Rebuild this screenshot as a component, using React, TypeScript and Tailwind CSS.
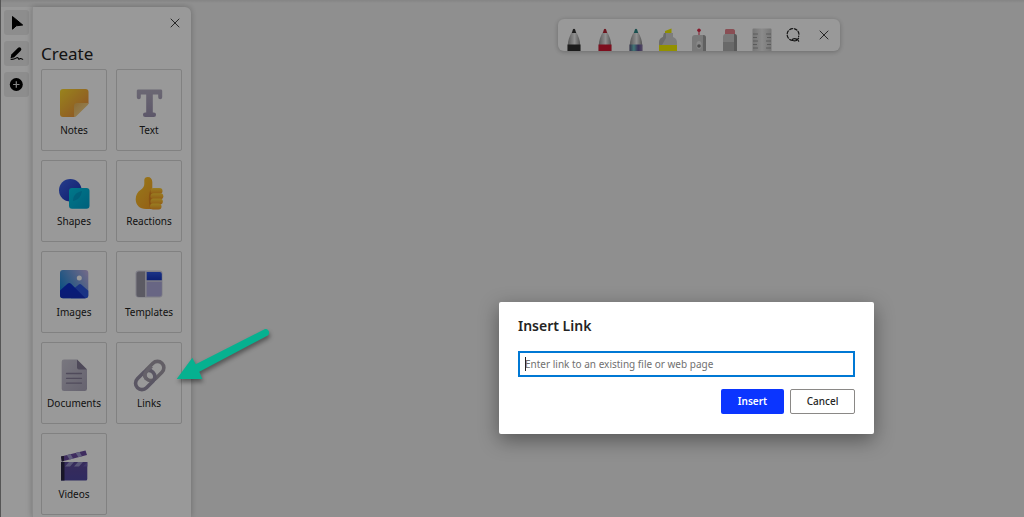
import type { ReactNode } from 'react';
import { X } from 'lucide-react';

function TileIcon({ children }: { children: ReactNode }) {
  return (
    <svg viewBox="0 0 34 34" className="size-[34px]" aria-hidden="true">
      {children}
    </svg>
  );
}

function Gradient({ id, from, to, vertical = false }: { id: string; from: string; to: string; vertical?: boolean }) {
  return (
    <linearGradient id={id} x1="0" y1="0" x2={vertical ? '0' : '1'} y2="1">
      <stop offset="0" stopColor={from} />
      <stop offset="1" stopColor={to} />
    </linearGradient>
  );
}

const notesIcon = (
  <TileIcon>
    <defs>
      <Gradient id="note" from="#ffdc30" to="#ea8340" />
      <Gradient id="fold" from="#e9b455" to="#fbe2a4" />
    </defs>
    <path d="M6 4h22.500a3 3 0 0 1 3 3v11.500L17.500 32H6a3 3 0 0 1-3-3V7a3 3 0 0 1 3-3Z" fill="url(#note)" />
    <path d="M31.500 18H20a3 3 0 0 0-3 3v11c1 0 1.700-.2 2.400-.9L30.700 20c.5-.6.8-1.200.8-2Z" fill="url(#fold)" />
  </TileIcon>
);

const textIcon = (
  <TileIcon>
    <defs><Gradient id="tee" from="#b2acc0" to="#9b91b0" vertical /></defs>
    <path
      d="M6.200 4.500h22.600c.8 0 1.400.6 1.400 1.400v6.300a2 2 0 0 1-4 0V9.500h-5.400v18h1a2.200 2.200 0 0 1 0 4.500h-8.600a2.200 2.200 0 0 1 0-4.500h1v-18H8.800v2.700a2 2 0 0 1-4 0V5.900c0-.8.6-1.400 1.400-1.400Z"
      fill="url(#tee)"
    />
  </TileIcon>
);

const shapesIcon = (
  <TileIcon>
    <defs>
      <Gradient id="disc" from="#3f66e8" to="#1a2fb8" />
      <Gradient id="square" from="#00c8e6" to="#00a0ce" />
    </defs>
    <circle cx="13.300" cy="14.300" r="11.300" fill="url(#disc)" />
    <rect x="12" y="12" width="20.500" height="20.700" rx="3" fill="url(#square)" />
    <path d="M16 25c0-6 4-9 9-10-1 6-4 9-9 10Z" fill="#0090c0" opacity=".6" />
  </TileIcon>
);

const reactionsIcon = (
  <TileIcon>
    <defs>
      <Gradient id="palm" from="#ffcb2c" to="#f59a24" />
      <Gradient id="finger" from="#ffd338" to="#f39a26" vertical />
    </defs>
    <path
      d="M15.800 1c2.800 0 4.500 2 4.500 5v8.500h5V33H14C7.500 33 3.700 29 3.700 23.300c0-4.300 2-7.500 4.800-9.300 2.400-1.700 3.800-3.500 3.800-6V4c0-1.800 1.500-3 3.500-3Z"
      fill="url(#palm)"
    />
    <path d="M18.500 14c-2.200 4-2.200 14 0 19h3V14Z" fill="#dd7b20" opacity=".7" />
    <g fill="url(#finger)">
      <rect x="18.500" y="12" width="12" height="6" rx="3" />
      <rect x="18.500" y="17.200" width="12.800" height="6" rx="3" />
      <rect x="18.500" y="22.400" width="12.300" height="6" rx="3" />
      <rect x="18" y="27.500" width="11.500" height="6" rx="3" />
    </g>
  </TileIcon>
);

const imagesIcon = (
  <TileIcon>
    <defs>
      <linearGradient id="sky" x1="0" y1=".6" x2="1" y2="0">
        <stop offset="0" stopColor="#1a88d8" />
        <stop offset="1" stopColor="#c5b2e4" />
      </linearGradient>
      <Gradient id="hill" from="#0a30d0" to="#1430c0" vertical />
    </defs>
    <rect x="3" y="3" width="28.300" height="28.300" rx="3" fill="url(#sky)" />
    <path d="M14 24l7.500-6.300c1-.9 2-.9 3 0l6.800 6v4.600a3 3 0 0 1-3 3H14Z" fill="#2c55dc" />
    <path d="M3 23.500l7.500-6.800c1.200-1.100 2.300-1.100 3.500 0l14.500 14.600H6a3 3 0 0 1-3-3Z" fill="url(#hill)" />
    <circle cx="22.300" cy="11" r="2.500" fill="#fff" />
  </TileIcon>
);

const templatesIcon = (
  <TileIcon>
    <defs><Gradient id="header" from="#2c55e0" to="#1534be" vertical /></defs>
    <rect x="3.500" y="3.500" width="27" height="27" rx="3" fill="#d6d4e2" />
    <path d="M7 4.500h6V30H7a2.500 2.500 0 0 1-2.500-2.500V7A2.500 2.500 0 0 1 7 4.500Z" fill="#9896a6" />
    <path d="M14.700 5h13.100a2 2 0 0 1 2 2v6.300H14.700Z" fill="url(#header)" />
    <path d="M14.700 14.700h15.100V27a2.500 2.500 0 0 1-2.500 2.500H14.700Z" fill="#aeabdc" />
  </TileIcon>
);

const documentsIcon = (
  <TileIcon>
    <defs><Gradient id="sheet" from="#cac7d4" to="#aaa5ba" /></defs>
    <path d="M7 1.500h13l10 10v19.300a2.300 2.300 0 0 1-2.300 2.300H7a2.300 2.300 0 0 1-2.300-2.300v-27A2.300 2.300 0 0 1 7 1.500Z" fill="url(#sheet)" />
    <path d="M20 1.500l10 10h-8a2 2 0 0 1-2-2Z" fill="#827b94" />
    <path d="M9.500 15.500h15M9.500 20.300h15M9.500 25.200h15" stroke="#857d98" strokeWidth="1.300" strokeLinecap="round" />
  </TileIcon>
);

const linksIcon = (
  <TileIcon>
    <g fill="none" strokeWidth="3.600">
      <rect x="-11" y="-6.400" width="22" height="12.800" rx="6.400" transform="translate(22.200 13) rotate(-45)" stroke="#a39da8" />
      <rect x="-11" y="-6.400" width="22" height="12.800" rx="6.400" transform="translate(13.200 22) rotate(-45)" stroke="#968fa6" />
      <path d="M14.300 20.900c-2-2.600-1.800-5.400.3-7.600l5-5" stroke="#a8a2b0" />
    </g>
  </TileIcon>
);

const videosIcon = (
  <TileIcon>
    <defs>
      <Gradient id="slate" from="#5d4a98" to="#5048a0" vertical />
      <clipPath id="arm"><path d="M4 7.500 28.500 1.500 30 6 4.800 12.500Z" /></clipPath>
    </defs>
    <g clipPath="url(#arm)">
      <path d="M3 0h28v14H3Z" fill="#6a4c9e" />
      <path d="m9 5 4 6h4l-4-7ZM18 3l4 6h4l-4-7Z" fill="#a09bd0" />
      <path d="M4 7l3 0 0 6-3 0Z" fill="#302944" />
    </g>
    <path d="M4 13h26.300v17a1.500 1.500 0 0 1-1.500 1.500H4Z" fill="url(#slate)" />
    <path d="M4 13h3.500v18.500H4Z" fill="#292544" />
    <path d="m12 13-4 4.500h5l4-4.500ZM21 13l-4 4.500h5l4-4.500Z" fill="#9691c8" />
    <path d="M30.300 13v4.500H26l4-4.500Z" fill="#6b5cae" />
  </TileIcon>
);

const tiles: { label: string; icon: ReactNode }[] = [
  { label: 'Notes', icon: notesIcon },
  { label: 'Text', icon: textIcon },
  { label: 'Shapes', icon: shapesIcon },
  { label: 'Reactions', icon: reactionsIcon },
  { label: 'Images', icon: imagesIcon },
  { label: 'Templates', icon: templatesIcon },
  { label: 'Documents', icon: documentsIcon },
  { label: 'Links', icon: linksIcon },
  { label: 'Videos', icon: videosIcon },
];

function RailButton({ label, children }: { label: string; children: ReactNode }) {
  return (
    <button type="button" aria-label={label} className="flex size-[25px] items-center justify-center rounded-[3px] bg-[#ececec]">
      {children}
    </button>
  );
}

function Rail() {
  return (
    <nav aria-label="Tools" className="flex w-[31px] shrink-0 flex-col items-center gap-[6px] bg-white pt-[3px]">
      <RailButton label="Select">
        <svg viewBox="0 0 25 25" className="size-[25px]"><path d="M8.500 6.500v12.700l3.800-3.400 6.400-.8Z" fill="#000" stroke="#000" strokeLinejoin="round" /></svg>
      </RailButton>
      <RailButton label="Ink">
        <svg viewBox="0 0 25 25" className="size-[25px]" fill="none" strokeLinecap="round">
          <path d="M15.300 8.300 9.500 14.200" stroke="#000" strokeWidth="4" />
          <path d="m7.600 12.800 3.200 3.200-4.300 1.300Z" fill="#000" />
          <path d="M7 18.300c2 .2 3.500-.2 5-1.200 1.500-.9 2.400-.4 2.400.4 0 1 1.200.6 2.100.1 1-.5 1.300.8 2.200.7" stroke="#000" strokeWidth="1.100" />
        </svg>
      </RailButton>
      <RailButton label="Create">
        <svg viewBox="0 0 25 25" className="size-[25px]">
          <circle cx="12.300" cy="12.500" r="6.500" />
          <path d="M12.300 9.300v6.400M9.100 12.500h6.400" stroke="#ddd" strokeWidth="1.200" />
        </svg>
      </RailButton>
    </nav>
  );
}

function CreatePanel() {
  return (
    <section className="flex w-[159px] shrink-0 flex-col rounded-tr-md border-l border-[#e8e8e8] bg-white px-2 shadow-[0_0_6px_rgba(0,0,0,0.25)]">
      <button type="button" aria-label="Close panel" className="mt-2 flex size-4 items-center justify-center self-end text-[#222]">
        <X className="size-4" strokeWidth={1.3} />
      </button>
      <h1 className="mt-[11px] text-[17px] leading-6 text-[#222]">Create</h1>
      <div className="mt-[3px] grid grid-cols-[66px_66px] gap-[9px]">
        {tiles.map((tile) => (
          <button
            key={tile.label}
            type="button"
            className="flex h-[82px] flex-col items-center gap-[3px] rounded-xs border border-[#d8d8d8] pt-[15px] text-[10px] leading-4 text-[#222]"
          >
            {tile.icon}
            <span>{tile.label}</span>
          </button>
        ))}
      </div>
    </section>
  );
}

function Pen({ id, tip, band }: { id: string; tip: string; band: string[] }) {
  return (
    <svg viewBox="0 0 14 23" className="h-[23px] w-[14px]" aria-hidden="true">
      <defs>
        <linearGradient id={`${id}-band`}>
          {band.map((color, i) => (
            <stop key={color} offset={i / Math.max(1, band.length - 1)} stopColor={color} />
          ))}
        </linearGradient>
        <linearGradient id={`${id}-barrel`}>
          <stop offset="0" stopColor="#949494" />
          <stop offset=".55" stopColor="#f0f0f0" />
          <stop offset="1" stopColor="#8b8b8b" />
        </linearGradient>
      </defs>
      <path d="M5 4h4c2.500 4 4 8 4.200 13v6H.8v-6C1 12 2.500 8 5 4Z" fill={`url(#${id}-barrel)`} />
      <path d="M4.800 5 6 1.300c.4-.8 1.600-.8 2 0L9.200 5Z" fill={tip} />
      <path d="M.5 16.500h13V23H.5Z" fill={`url(#${id}-band)`} />
    </svg>
  );
}

function Highlighter() {
  return (
    <svg viewBox="0 0 20 23" className="h-[23px] w-5" aria-hidden="true">
      <path d="M7 5V3l6.500-2.500V5Z" fill="#f0ef00" />
      <path d="M6 5h9v4c3 1 4 3 4 6v8H1v-8c0-3 1-5 4-6Z" fill="#d0d0d0" />
      <path d="M6 5h2v5l-4 7H1v-2c0-3 1-5 4-6Z" fill="#b4b4b4" />
      <path d="M1 17h18v6H1Z" fill="#f5f200" />
    </svg>
  );
}

function LaserPointer() {
  return (
    <svg viewBox="0 0 16 23" className="h-[23px] w-4" aria-hidden="true">
      <path d="M8 2v6" stroke="#e0526a" strokeWidth="1.200" />
      <circle cx="8" cy="2.200" r="1.800" fill="#e02b49" />
      <path d="M4 7h8c2 0 3 1 3 3v13H1V10c0-2 1-3 3-3Z" fill="#cacaca" />
      <path d="M12 7c2 0 3 1 3 3v13h-3Z" fill="#a0a0a0" />
      <ellipse cx="8" cy="17" rx="2.600" ry="4" fill="#e4e4e4" />
      <circle cx="8" cy="18" r="1.800" fill="#808080" />
    </svg>
  );
}

function Eraser() {
  return (
    <svg viewBox="0 0 16 23" className="h-[23px] w-4" aria-hidden="true">
      <path d="M4 1h7c1.300 0 2 1 2 2v4H3V3c0-1.200.3-2 1-2Z" fill="#e4828c" />
      <path d="M3.500 6h9c1.600 0 2.500 1 2.500 3v14H1V9c0-2 .9-3 2.500-3Z" fill="#cacaca" />
      <path d="M1 14h14v9H1Z" fill="#b0b0b0" />
      <path d="M12 6h.5C14.100 6 15 7 15 9v14h-3Z" fill="#959595" />
    </svg>
  );
}

function Ruler() {
  return (
    <svg viewBox="0 0 20 23" className="h-[23px] w-5" aria-hidden="true">
      <defs>
        <linearGradient id="ruler">
          <stop offset="0" stopColor="#c4c4c4" />
          <stop offset=".5" stopColor="#e8e8e8" />
          <stop offset="1" stopColor="#c4c4c4" />
        </linearGradient>
      </defs>
      <path d="M1.500.5h17a1 1 0 0 1 1 1V23H.5V1.500a1 1 0 0 1 1-1Z" fill="url(#ruler)" />
      <path d="M1 6h5M1 9.500h4M1 13h5M1 16.500h4M1 20h5M19 6h-5M19 9.500h-4M19 13h-5M19 16.500h-4M19 20h-5" stroke="#8a8a8a" strokeWidth=".8" />
    </svg>
  );
}

function Lasso() {
  return (
    <svg viewBox="0 0 16 16" className="size-4" fill="none" stroke="#222" strokeWidth="1.200" strokeLinecap="round">
      <path d="M7.500 13.400A5.900 5.900 0 1 1 13.600 9.500" strokeDasharray="3 1.700" />
      <ellipse cx="9.600" cy="12.800" rx="2.200" ry="1.100" />
      <path d="M11.300 12.300c1 .3 2 1 2.400 1.900M11.300 13.400l2.300-2.200" />
    </svg>
  );
}

function InkToolbar() {
  const inks: { label: string; icon: ReactNode }[] = [
    { label: 'Black pen', icon: <Pen id="black" band={['#303030']} tip="#303030" /> },
    { label: 'Red pen', icon: <Pen id="red" band={['#d01932']} tip="#b52434" /> },
    { label: 'Galaxy pen', icon: <Pen id="galaxy" band={['#55557e', '#6fc4c4', '#5c4d92', '#8a7aa8']} tip="#2c8584" /> },
    { label: 'Highlighter', icon: <Highlighter /> },
    { label: 'Laser pointer', icon: <LaserPointer /> },
    { label: 'Eraser', icon: <Eraser /> },
    { label: 'Ruler', icon: <Ruler /> },
  ];
  return (
    <div
      role="toolbar"
      aria-label="Inking"
      className="absolute top-[19px] right-[184px] grid h-8 w-[282px] grid-cols-9 overflow-hidden rounded-md bg-white shadow-[0_1px_5px_rgba(0,0,0,0.25)]"
    >
      {inks.map((ink) => (
        <button key={ink.label} type="button" aria-label={ink.label} className="flex items-end justify-center">
          {ink.icon}
        </button>
      ))}
      <button type="button" aria-label="Lasso select" className="flex items-center justify-center"><Lasso /></button>
      <button type="button" aria-label="Close inking" className="flex items-center justify-center text-[#222]">
        <X className="size-4" strokeWidth={1.3} />
      </button>
    </div>
  );
}

function InsertLinkDialog() {
  return (
    <div
      role="dialog"
      aria-labelledby="dialog-title"
      className="absolute top-[302px] right-[150px] w-[375px] rounded-xs bg-white px-[19px] pt-[14px] pb-5 shadow-[0_6px_20px_rgba(0,0,0,0.4)]"
    >
      <h2 id="dialog-title" className="text-[14px] leading-5 font-semibold text-[#242424]">Insert Link</h2>
      <div className="relative mt-[15px]">
        <input
          type="text"
          aria-label="Link"
          placeholder="Enter link to an existing file or web page"
          className="block h-[26px] w-full border-2 border-[#0078d4] bg-white px-[5px] text-[10px] text-[#222] outline-none placeholder:text-[#707070]"
        />
        <span className="absolute top-[6px] left-[7px] h-[14px] w-px bg-[#222]" />
      </div>
      <div className="mt-3 flex justify-end gap-[6px] text-[10px]">
        <button type="button" className="h-[25px] w-[63px] rounded-xs bg-[#0b35ff] font-semibold text-white">Insert</button>
        <button type="button" className="h-[25px] w-[65px] rounded-xs border border-[#8a8886] bg-white font-medium text-[#242424]">Cancel</button>
      </div>
    </div>
  );
}

function PointerArrow() {
  return (
    <svg viewBox="0 0 110 70" className="absolute top-[320px] left-[169px] h-[70px] w-[110px] drop-shadow-[1px_3px_2px_rgba(0,0,0,0.4)]" aria-hidden="true">
      <path d="M6.700 59 22.300 37.700l3.400 6.600L94.500 9.300c4-1.500 6.500 4.500 2.800 6.500L29.300 51.700l3 7.300Z" fill="#06b190" />
    </svg>
  );
}

export default function App() {
  return (
    <div className="relative flex min-h-screen overflow-hidden border-l border-[#555] bg-[#efefef] font-['Noto_Sans','Open_Sans',sans-serif]">
      <div className="absolute inset-x-0 top-0 h-[3px] bg-linear-to-b from-[#dcdcdc] to-[#efefef]" />
      <div className="mt-[7px] flex">
        <Rail />
        <CreatePanel />
      </div>
      <InkToolbar />
      <div className="absolute inset-0 bg-black/40" />
      <InsertLinkDialog />
      <PointerArrow />
    </div>
  );
}
